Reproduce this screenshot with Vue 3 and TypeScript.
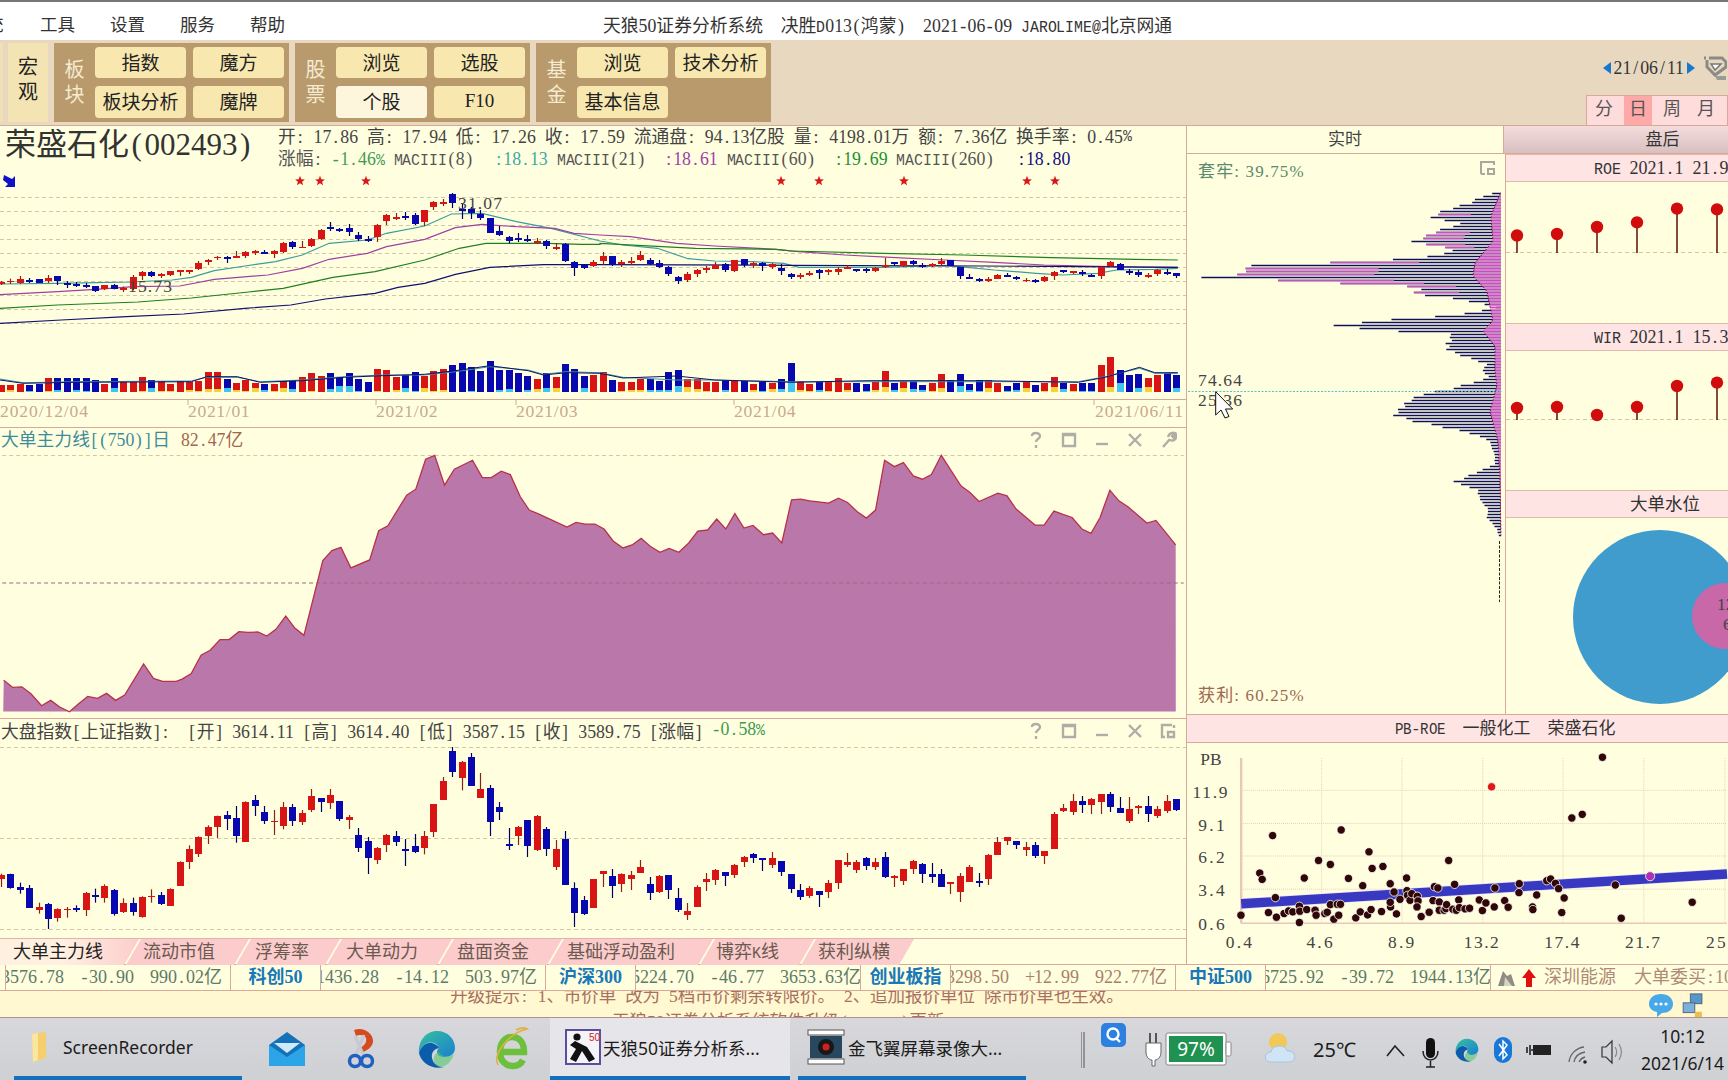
<template>
  <div class="app">
    <div class="titlebar">
      <div class="menu">
        <span class="menu-cut">统</span>
        <span v-for="m in menus" :key="m" class="menu-item">{{ m }}</span>
      </div>
      <div class="app-title"><T t="天狼50证券分析系统  决胜D013(鸿蒙)  2021-06-09 JAROLIME@北京网通" /></div>
    </div>

    <div class="toolbar">
      <div class="sliver"></div>
      <div class="macro">宏<br />观</div>
      <div v-for="g in groups" :key="g.name" class="group">
        <div class="group-name">{{ g.name[0] }}<br />{{ g.name[1] }}</div>
        <div class="group-btns">
          <div v-for="b in g.btns" :key="b" class="btn" :class="{ on: b === '个股' }">{{ b }}</div>
        </div>
      </div>
      <div class="tool-right">
        <div class="date-row">
          <svg width="10" height="14" viewBox="0 0 10 14"><path d="M9 1 L1 7 L9 13 Z" fill="#1878d0" /></svg>
          <span><T t="21/06/11" /></span>
          <svg width="10" height="14" viewBox="0 0 10 14"><path d="M1 1 L9 7 L1 13 Z" fill="#1878d0" /></svg>
          <svg class="date-ico" width="24" height="26" viewBox="0 0 24 26">
            <path d="M1 3 H3 M6 3 H19 L23 7 V12 L12 20 L4 12 V5" fill="none" stroke="#8a8a86" stroke-width="3" />
            <path d="M8 9 H18 L12 15 Z" fill="#fff" stroke="#777" stroke-width="1.5" />
            <path d="M12 21 H23 V25 H14 Z" fill="#9a9a96" />
          </svg>
        </div>
        <div class="periods">
          <span v-for="p in periods" :key="p" class="period" :class="{ on: p === '日' }">{{ p }}</span>
        </div>
      </div>
    </div>

    <div class="main">
      <div class="left">
        <section class="kline">
          <div class="kline-head">
            <div class="stock-name"><T t="荣盛石化(002493)" /></div>
            <div class="stock-info">
              <div class="info-row"><T t="开: 17.86 高: 17.94 低: 17.26 收: 17.59 流通盘: 94.13亿股 量: 4198.01万 额: 7.36亿 换手率: 0.45%" /></div>
              <div class="info-row">
                <span v-for="t in infoMa" :key="t.text" :style="{ color: t.c, marginLeft: t.ml + 'px' }"><T :t="t.text" /></span>
              </div>
            </div>
          </div>
          <svg class="chart kline-svg" viewBox="0 169 1186 258">
            <line v-for="y in klineGrid" :key="y" x1="0" x2="1186" :y1="y" :y2="y" class="dash" />
            <path d="M4 175 L12 179 L15 176 L15 187 L5 187 L8 184 L3 180 Z" fill="#1010c8" />
            <polygon v-for="s in stars" :key="s" :points="starPts(s, 181, 5.2)" fill="#d81818" />
            <polyline :points="maTeal" class="ma" stroke="#3c9c9c" />
            <polyline :points="maPurple" class="ma" stroke="#a040a0" />
            <polyline :points="maGreen" class="ma" stroke="#208020" />
            <polyline :points="maNavy" class="ma" stroke="#101070" />
            <g v-for="c in klineCandles" :key="c.x">
              <line :x1="c.x" :x2="c.x" :y1="c.high" :y2="c.low" :stroke="c.up ? '#8a2410' : '#00005c'" class="wick" />
              <rect :x="c.x - 3.5" :y="c.top" width="7" :height="c.h" :fill="c.up ? '#d81414' : '#0808b0'" class="crisp" />
            </g>
            <text x="458" y="209" class="val" :textLength="hw('31.07')">31.07</text>
            <text x="128" y="292" class="val" :textLength="hw('15.73')">15.73</text>
            <g v-for="b in volBars" :key="b.x">
              <rect :x="b.x - 3.5" :y="b.top" width="7" :height="392 - b.top" :fill="b.up ? '#d81414' : '#0808b0'" class="crisp" />
              <rect :x="b.x - 3.5" :y="392 - b.inner" width="7" :height="b.inner" :fill="b.up ? '#f8d23a' : '#40c4f0'" class="crisp" />
            </g>
            <polyline :points="volA" class="vol-ma" stroke="#3c9c9c" />
            <polyline :points="volB" class="vol-ma" stroke="#101070" />
            <line x1="0" x2="1186" y1="399.5" y2="399.5" stroke="#cfa898" />
            <line v-for="t in dateTicks" :key="t" :x1="t" :x2="t" y1="399" y2="405" stroke="#cfa898" />
            <text v-for="d in dates" :key="d.t" :x="d.x" y="417" class="date" :textLength="hw(d.t)">{{ d.t }}</text>
          </svg>
        </section>

        <section class="indicator">
          <div class="panel-head">
            <span class="ind-title"><T t="大单主力线[(750)]日" /></span>
            <span class="ind-val"><T t="82.47亿" /></span>
            <div class="panel-icons">
              <svg v-for="ic in indIcons" :key="ic" width="18" height="18" viewBox="0 0 18 18"><path :d="ic" /></svg>
            </div>
          </div>
          <svg class="chart ind-svg" viewBox="0 453 1186 265">
            <line x1="0" x2="1186" y1="454.5" y2="454.5" class="dash" />
            <polygon :points="areaPts + ' 1178,711.5 1,711.5'" fill="#ba78aa" />
            <polyline :points="areaPts" fill="none" stroke="#b8304a" stroke-width="1.3" />
            <line x1="0" x2="1186" y1="582.5" y2="582.5" class="dash dark" />
          </svg>
        </section>

        <section class="index">
          <div class="panel-head">
            <span class="idx-title"><T t="大盘指数[上证指数]:  [开] 3614.11 [高] 3614.40 [低] 3587.15 [收] 3589.75 [涨幅] " /></span>
            <span class="idx-pct"><T t="-0.58%" /></span>
            <div class="panel-icons">
              <svg v-for="ic in idxIcons" :key="ic" width="18" height="18" viewBox="0 0 18 18"><path :d="ic" /></svg>
            </div>
          </div>
          <svg class="chart idx-svg" viewBox="0 745 1186 192">
            <line v-for="y in [746.5, 837.5, 928.5]" :key="y" x1="0" x2="1186" :y1="y" :y2="y" class="dash" />
            <g v-for="c in indexCandles" :key="c.x">
              <line :x1="c.x" :x2="c.x" :y1="c.high" :y2="c.low" :stroke="c.up ? '#8a2410' : '#00005c'" class="wick" />
              <rect :x="c.x - 3.5" :y="c.top" width="7" :height="c.h" :fill="c.up ? '#d81414' : '#0808b0'" class="crisp" />
            </g>
          </svg>
        </section>

        <div class="tabs">
          <div
            v-for="(t, i) in tabs"
            :key="t.name"
            class="tab"
            :class="{ first: i === 0 }"
            :style="{ width: t.w + 'px', paddingLeft: t.pad + 'px' }"
          ><T :t="t.name" /></div>
        </div>
      </div>

      <div class="right">
        <div class="right-heads">
          <div class="rt-head">实时</div>
          <div class="after-head">盘后</div>
        </div>
        <div class="right-body">
          <svg class="chart rt-svg" viewBox="1187 153 318 560">
            <text x="1198" y="176" class="rt-lbl" :textLength="hw('套牢: 39.75%')">套牢: 39.75%</text>
            <path d="M1481 173 V161 H1494 V164 M1481 173 H1485 M1488 168 H1494 V173 H1488 Z" fill="none" stroke="#a8a8a0" stroke-width="2" />
            <g v-for="r in profile" :key="r.y">
              <line :x1="r.x" x2="1501" :y1="r.y" :y2="r.y" stroke="#10105c" stroke-width="1.5" />
              <line v-if="r.pink > r.x" :x1="r.x" :x2="r.pink" :y1="r.y" :y2="r.y" stroke="#c850c0" stroke-width="1.5" />
              <line :x1="1501 - r.m" x2="1501" :y1="r.y" :y2="r.y" stroke="#d048c8" stroke-width="1.9" />
            </g>
            <polyline :points="profileEdge" fill="none" stroke="#8a1a5a" stroke-width="1" stroke-dasharray="2 1.5" />
            <line x1="1499.5" x2="1499.5" y1="540" y2="601" stroke="#222" stroke-dasharray="3 1.5" />
            <line x1="1188" x2="1503" y1="390.5" y2="390.5" stroke="#58c0d0" stroke-dasharray="2 1.5" />
            <text x="1198" y="385" class="val" :textLength="hw('74.64')">74.64</text>
            <text x="1198" y="405" class="val" :textLength="hw('25.36')">25.36</text>
            <path d="M1215.7 390.7 V414 L1221 409 L1225 417 L1229 415.5 L1225.5 408 H1232.7 Z" fill="#fff" stroke="#111" stroke-width="1" />
            <text x="1198" y="700" class="rt-lbl gain" :textLength="hw('获利: 60.25%')">获利: 60.25%</text>
          </svg>
          <div class="stack">
            <div class="stack-head fin"><T t="ROE 2021.1 21.9" /></div>
            <svg class="chart" width="318" height="141" viewBox="1505 181 318 141">
              <line x1="1505" x2="1823" y1="251.5" y2="251.5" class="dash" />
              <g v-for="p in roe" :key="p.x">
                <line :x1="p.x" :x2="p.x" :y1="p.y" y2="252" stroke="#6a1c10" stroke-width="1.6" />
                <circle :cx="p.x" :cy="p.y" r="6.2" fill="#d00c0c" />
              </g>
            </svg>
            <div class="stack-head fin"><T t="WIR 2021.1 15.3" /></div>
            <svg class="chart" width="318" height="139" viewBox="1505 351 318 139">
              <line x1="1505" x2="1823" y1="419.5" y2="419.5" class="dash" />
              <g v-for="p in wir" :key="p.x">
                <line :x1="p.x" :x2="p.x" :y1="p.y" y2="420" stroke="#6a1c10" stroke-width="1.6" />
                <circle :cx="p.x" :cy="p.y" r="6.2" fill="#d00c0c" />
              </g>
            </svg>
            <div class="stack-head">大单水位</div>
            <svg class="chart" width="318" height="195" viewBox="1505 518 318 195">
              <circle cx="1659" cy="617" r="87" fill="#409ccc" />
              <circle cx="1724" cy="616" r="33" fill="#c868a8" />
              <text x="1716" y="610" class="val">12</text>
              <text x="1722" y="630" class="val">6</text>
            </svg>
          </div>
        </div>
        <div class="pb-head"><T t="PB-ROE  一般化工  荣盛石化" /></div>
        <svg class="chart pb-svg" viewBox="1187 742 634 222">
          <line v-for="x in pbGridX" :key="x" :x1="x" :x2="x" y1="757" y2="922" stroke="#e0d0b8" stroke-dasharray="1 1" />
          <line v-for="y in pbGridY" :key="y" x1="1240" x2="1728" :y1="y" :y2="y" stroke="#e0d0b8" stroke-dasharray="1 1" />
          <line x1="1240" x2="1240" y1="757" y2="923" stroke="#e8c8b8" stroke-width="2.4" />
          <line x1="1240" x2="1728" y1="923" y2="923" stroke="#e8c8b8" stroke-width="1.6" />
          <line x1="1240" y1="903.5" x2="1728" y2="873.5" stroke="#e8e0f8" stroke-width="11" />
          <line x1="1240" y1="903.5" x2="1728" y2="873.5" stroke="#3838c0" stroke-width="9.5" />
          <text x="1199" y="764" class="val">PB</text>
          <text v-for="l in pbYLabels" :key="l.t" :x="l.x" :y="l.y" class="val" :textLength="hw(l.t)">{{ l.t }}</text>
          <text v-for="l in pbXLabels" :key="l.t" :x="l.x" y="948" class="val" :textLength="hw(l.t)">{{ l.t }}</text>
          <circle v-for="(d, i) in pbDots" :key="i" :cx="d.x" :cy="d.y" r="4.2" fill="#300606" stroke="#fff" stroke-width="0.8" />
          <circle cx="1491.5" cy="786" r="4.2" fill="#e01818" stroke="#fff" stroke-width="0.8" />
          <circle cx="1650.8" cy="875.8" r="4.6" fill="#b030b0" stroke="#fff" stroke-width="0.8" />
        </svg>
      </div>
    </div>

    <div class="ticker">
      <template v-for="q in quotes" :key="q.label">
        <div class="quote" :class="q.up ? 'up' : 'down'">
          <span><T :t="q.a" /></span><span><T :t="q.b" /></span><span><T :t="q.c" /></span>
        </div>
        <div class="quote-label">{{ q.label }}</div>
      </template>
      <div class="quote down">
        <span><T t="6725.92" /></span><span><T t="-39.72" /></span><span><T t="1944.13亿" /></span>
      </div>
      <div class="news">
        <svg width="20" height="20" viewBox="0 0 20 20">
          <path d="M1 18 L6 3 L10 8 L14 6 L18 18 Z" fill="#908c84" />
          <path d="M7 18 L8 9 L15 18 Z" fill="#d8d4c4" />
        </svg>
        <svg width="14" height="20" viewBox="0 0 14 20"><path d="M7 1 L14 10 H10 V19 H4 V10 H0 Z" fill="#e01010" /></svg>
        <span class="news-text"><T t="深圳能源  大单委买:10896" /></span>
      </div>
    </div>

    <div class="notice">
      <div class="notice-lines">
        <div><T t="升级提示: 1、市价单 改为 5档市价剩余转限价。 2、追加报价单位 除市价单也生效。" /></div>
        <div><T t="天狼50证券分析系统软件升级(      )更新。" /></div>
      </div>
      <div class="notice-icons">
        <svg width="26" height="24" viewBox="0 0 26 24">
          <path d="M13 1 C20 1 25 5 25 11 C25 17 20 20 14 20 L9 24 L9 19 C4 18 1 15 1 11 C1 5 6 1 13 1 Z" fill="#48a8e8" />
          <circle cx="8" cy="11" r="1.6" fill="#fff" /><circle cx="13" cy="11" r="1.6" fill="#fff" /><circle cx="18" cy="11" r="1.6" fill="#fff" />
        </svg>
        <svg width="24" height="25" viewBox="0 0 24 28">
          <rect x="9" y="1" width="13" height="11" fill="#5898c8" stroke="#48607c" />
          <rect x="1" y="11" width="13" height="11" fill="#7cb0d8" stroke="#48607c" />
          <rect x="14" y="21" width="8" height="6" fill="#e8c050" />
        </svg>
      </div>
    </div>

    <div class="taskbar">
      <div class="task-item folder-item">
        <svg width="18" height="32" viewBox="0 0 18 32">
          <path d="M2 3 L16 1 V27 L3 31 Z" fill="#f4cf6c" />
          <path d="M2 3 L8 2 V29 L3 31 Z" fill="#fbe6a0" />
        </svg>
        <span>ScreenRecorder</span>
      </div>
      <div class="pin">
        <svg width="36" height="34" viewBox="0 0 36 34">
          <path d="M18 0 L36 13 V34 H0 V13 Z" fill="#1672b8" />
          <path d="M0 13 L18 25 L36 13 V34 H0 Z" fill="#2ca4e8" />
          <path d="M5 11 H31 L18 21 Z" fill="#cfeaf8" />
        </svg>
      </div>
      <div class="pin">
        <svg width="30" height="42" viewBox="0 0 30 42">
          <path d="M7 2 C17 -2 27 6 26 14 C25 19 21 22 16 24 L13 20 C18 17 20 14 19 10 C18 7 12 6 9 8 Z" fill="#d64a20" />
          <path d="M8 8 L17 28 M17 7 L9 27" stroke="#c8c8d0" stroke-width="3" />
          <circle cx="8" cy="33" r="5.5" fill="none" stroke="#2060c0" stroke-width="3.5" />
          <circle cx="20" cy="33" r="5.5" fill="none" stroke="#2060c0" stroke-width="3.5" />
        </svg>
      </div>
      <div class="pin">
        <svg width="38" height="38" viewBox="0 0 38 38"><use href="#edge-logo" /></svg>
      </div>
      <div class="pin">
        <svg width="34" height="44" viewBox="0 0 34 44">
          <path d="M7 25 H29 C29 15 24 10 17 10 C10 10 5 16 5 25 C5 34 11 39 18 39 C23 39 26 37 28 33" fill="none" stroke="#6cc03c" stroke-width="6.5" />
          <path d="M3 38 C-3 26 16 5 32 2 C29 0 25 1 21 3" fill="none" stroke="#e0b040" stroke-width="1.6" />
        </svg>
      </div>
      <div class="task-item active-item">
        <svg width="36" height="36" viewBox="0 0 36 36">
          <rect x="1" y="1" width="34" height="34" fill="#f4f4f8" stroke="#58509c" stroke-width="2" />
          <circle cx="12" cy="8" r="3.6" fill="#111" />
          <path d="M10 12 L22 18 L30 30 L24 33 L17 22 L11 33 L5 30 L11 20 L5 16 Z" fill="#111" />
          <text x="24" y="12" class="tiny">50</text>
        </svg>
        <span>天狼50证券分析系...</span>
      </div>
      <div class="task-item film-item">
        <svg width="38" height="36" viewBox="0 0 38 36">
          <rect x="1" y="1" width="36" height="5" fill="#fff" stroke="#555" />
          <rect x="1" y="30" width="36" height="5" fill="#fff" stroke="#555" />
          <rect x="3" y="7" width="32" height="22" fill="#284860" />
          <circle cx="19" cy="18" r="8" fill="#181818" />
          <circle cx="19" cy="18" r="3.5" fill="#d02020" />
        </svg>
        <span>金飞翼屏幕录像大...</span>
      </div>
      <svg class="tray" width="550" height="62" viewBox="1081 1018 550 62">
        <path d="M1081 1032 V1068 M1084 1032 V1068" stroke="#555" stroke-width="1" />
        <rect x="1101" y="1023" width="25" height="24" rx="5" fill="#2c80e0" />
        <circle cx="1113" cy="1034" r="5.5" fill="none" stroke="#fff" stroke-width="2.4" />
        <path d="M1116 1038 L1120 1042" stroke="#fff" stroke-width="2.4" />
        <path d="M1150 1033 V1043 M1156 1033 V1043" stroke="#555" stroke-width="2" fill="none" />
        <path d="M1146 1043 H1161 V1052 C1161 1058 1157 1060 1155 1060 V1066 H1152 V1060 C1150 1060 1146 1058 1146 1052 Z" fill="#fff" stroke="#666" />
        <rect x="1166" y="1033" width="60" height="32" rx="2" fill="#fff" stroke="#888" />
        <rect x="1169" y="1036" width="54" height="26" fill="#1f9150" />
        <rect x="1226" y="1042" width="5" height="14" rx="1.5" fill="#fff" stroke="#888" />
        <text x="1196" y="1056" class="bat-text">97%</text>
        <circle cx="1278" cy="1042" r="9" fill="#f2c858" />
        <path d="M1271 1062 C1263 1062 1264 1052 1271 1052 C1272 1044 1286 1044 1287 1051 C1297 1050 1297 1062 1289 1062 Z" fill="#cfe4f4" stroke="#a8c4dc" />
        <text x="1313" y="1057" class="temp">25℃</text>
        <path d="M1387 1056 L1395 1046 L1404 1056" fill="none" stroke="#222" stroke-width="1.6" />
        <rect x="1426" y="1038" width="9" height="20" rx="4.5" fill="#111" />
        <path d="M1423 1051 C1423 1063 1438 1063 1438 1051 M1430.5 1061 V1067 M1426 1067 H1435" fill="none" stroke="#222" stroke-width="1.5" />
        <svg x="1455" y="1038" width="24" height="24" viewBox="0 0 38 38"><use href="#edge-logo" /></svg>
        <rect x="1494" y="1037" width="18" height="26" rx="9" fill="#1878d8" />
        <path d="M1499 1044 L1507 1055 L1503 1059 V1041 L1507 1045 L1499 1056" fill="none" stroke="#fff" stroke-width="1.5" />
        <rect x="1533" y="1045" width="18" height="10" fill="#222" />
        <path d="M1527 1047 V1053 M1530 1045 V1055 M1531 1050 H1533" stroke="#222" stroke-width="1.6" />
        <path d="M1569 1062 C1570 1054 1576 1048 1584 1047 M1574 1062 C1575 1057 1579 1053 1585 1052 M1579 1062 C1580 1060 1581 1058 1585 1057" fill="none" stroke="#666" stroke-width="1.3" />
        <circle cx="1585" cy="1062" r="1.8" fill="#222" />
        <path d="M1602 1047 H1606 L1612 1041 V1063 L1606 1057 H1602 Z" fill="none" stroke="#333" stroke-width="1.2" />
        <path d="M1615 1047 C1617 1050 1617 1054 1615 1057 M1619 1044 C1622 1049 1622 1055 1619 1060" fill="none" stroke="#888" stroke-width="1.2" />
      </svg>
      <div class="clock">
        <div class="clock-time">10:12</div>
        <div class="clock-date">2021/6/14</div>
      </div>
    </div>

    <svg class="defs" width="0" height="0">
      <defs>
        <linearGradient id="edge-a" x1="0" y1="0" x2="1" y2="1">
          <stop offset="0" stop-color="#35c1a0" />
          <stop offset="1" stop-color="#1a7fd0" />
        </linearGradient>
        <symbol id="edge-logo" viewBox="0 0 38 38">
          <path d="M19 1 C30 1 37 9 37 18 C37 24 32 27 27 27 C22 27 19 25 19 22 C19 20 20 19 21 18 C19 13 14 11 9 13 C5 15 2 19 1 23 C0 11 8 1 19 1 Z" fill="url(#edge-a)" />
          <path d="M1 23 C3 16 9 12 14 13 C18 14 20 16 21 18 C15 19 12 25 15 31 C17 35 22 37 26 37 C14 40 3 33 1 23 Z" fill="#0c5cac" />
          <path d="M21 22 C23 27 31 28 36 24 C33 33 27 37 22 37 C17 36 15 31 16 27 C17 24 19 23 21 22 Z" fill="#52c870" opacity="0.6" />
        </symbol>
      </defs>
    </svg>
  </div>
</template>

<script setup lang="ts">
import { h, type FunctionalComponent, type VNodeChild } from 'vue'

interface Candle {
  x: number
  up: boolean
  top: number
  h: number
  high: number
  low: number
}

// 宋体的半角格：数字本身就是半角，其余 ASCII 字符放进半角宽的格子里
const T: FunctionalComponent<{ t: string }> = props => {
  const out: VNodeChild[] = []
  let run = ''
  const flush = () => {
    if (run) out.push(run)
    run = ''
  }
  for (const ch of props.t) {
    if (/[0-9]/.test(ch) || ch.charCodeAt(0) > 127) {
      run += ch
    } else {
      flush()
      const wide = /[A-Za-z%@]/.test(ch)
      out.push(h('span', { class: wide ? 'hw ltr' : 'hw' }, ch === ' ' ? '\u00a0' : ch))
    }
  }
  flush()
  return out
}
T.props = ['t']

function hw(t: string, fs = 17.6): number {
  let units = 0
  for (const ch of t) units += ch.charCodeAt(0) > 127 ? 2 : 1
  return (units * fs) / 2
}

const menus = ['工具', '设置', '服务', '帮助']
const periods = ['分', '日', '周', '月']

const groups = [
  { name: '板块', btns: ['指数', '魔方', '板块分析', '魔牌'] },
  { name: '股票', btns: ['浏览', '选股', '个股', 'F10'] },
  { name: '基金', btns: ['浏览', '技术分析', '基本信息'] }
]

const infoMa = [
  { text: '涨幅: ', c: '#555', ml: 0 },
  { text: '-1.46% ', c: '#3f9a50', ml: 0 },
  { text: 'MACIII(8)  ', c: '#555', ml: 0 },
  { text: ':18.13 ', c: '#3ea8a8', ml: 3 },
  { text: 'MACIII(21)  ', c: '#555', ml: 0 },
  { text: ':18.61 ', c: '#a040a8', ml: 1 },
  { text: 'MACIII(60)  ', c: '#555', ml: 0 },
  { text: ':19.69 ', c: '#209030', ml: 1 },
  { text: 'MACIII(260)  ', c: '#555', ml: 0 },
  { text: ':18.80', c: '#101080', ml: 5 }
]

const stars = [300, 320, 366, 781, 819, 904, 1027, 1055]
const klineGrid = [197.5, 211.5, 225.5, 239.5, 253.5, 267.5, 281.5, 295.5, 309.5, 323.5]
const dateTicks = [188, 376, 516, 734, 1094]
const dates = [
  { t: '2020/12/04', x: 0 },
  { t: '2021/01', x: 188 },
  { t: '2021/02', x: 376 },
  { t: '2021/03', x: 516 },
  { t: '2021/04', x: 734 },
  { t: '2021/06/11', x: 1095 }
]

function starPts(cx: number, cy: number, r: number): string {
  const out: string[] = []
  for (let i = 0; i < 10; i++) {
    const a = -Math.PI / 2 + (i * Math.PI) / 5
    const rr = i % 2 ? r * 0.42 : r
    out.push(`${(cx + rr * Math.cos(a)).toFixed(1)},${(cy + rr * Math.sin(a)).toFixed(1)}`)
  }
  return out.join(' ')
}

// 行情: 颜色 实体上 实体下 上影 下影，数值是放大 3 倍后的读数
function parseCandles(src: string, y0: number): Candle[] {
  return src
    .trim()
    .split(/\s*,\s*/)
    .map((row, i) => {
      const [c, a, b, t, l] = row.split(' ')
      const top = y0 + Number(a) / 3
      return {
        x: Math.round(1 + 9.4 * i) + 0.5,
        up: c === 'r',
        top,
        h: Math.max(1.5, (Number(b) - Number(a)) / 3),
        high: y0 + Number(t) / 3,
        low: y0 + Number(l) / 3
      }
    })
}

const klineCandles = parseCandles(
  `r 306 312 303 315,r 302 305 296 312,r 297 309 288 312,b 300 303 294 309,b 297 309 297 309,
  r 294 303 285 309,b 288 303 288 315,b 309 312 303 324,b 312 319 306 321,b 315 318 309 324,
  b 318 333 318 336,r 315 327 315 330,b 315 327 312 328,r 325 328 320 336,r 291 327 285 330,
  r 276 288 273 300,b 276 287 273 291,r 283 286 279 294,r 273 285 273 288,r 270 273 270 288,
  r 270 273 270 282,r 249 267 243 270,r 240 246 237 255,r 230 233 228 240,b 231 234 228 249,
  r 228 231 213 234,r 216 228 213 234,r 213 216 210 225,b 216 219 210 222,r 213 222 210 234,
  r 189 216 186 219,b 186 201 183 207,r 200 202 183 204,r 177 198 174 201,r 150 177 147 180,
  b 141 144 126 153,b 147 150 144 156,b 144 156 132 168,b 165 177 156 183,b 177 180 168 186,
  r 135 171 132 186,r 105 123 102 135,r 111 114 99 120,b 108 111 96 120,b 105 132 99 135,
  r 90 126 90 138,r 66 81 63 90,r 66 69 57 78,b 42 69 39 84,b 87 90 72 117,b 87 99 81 117,
  b 102 114 90 120,b 114 159 114 159,b 153 165 138 168,b 171 183 168 190,b 174 177 159 186,
  b 177 180 165 186,r 183 186 174 192,b 183 198 180 207,r 201 204 189 210,b 192 243 189 246,
  b 246 264 243 288,b 255 264 252 267,r 246 258 240 261,r 228 243 216 255,b 228 255 228 258,
  r 246 252 240 261,r 243 246 231 255,r 225 240 213 243,b 240 252 234 255,b 249 261 240 264,
  b 261 282 258 288,b 291 303 288 312,r 282 300 276 306,r 270 282 267 291,r 264 267 258 279,
  r 255 267 246 267,b 252 270 249 276,r 240 273 240 276,b 237 255 237 261,r 249 252 246 264,
  b 249 258 246 273,r 252 261 249 267,b 264 273 252 285,b 282 291 279 297,r 285 291 279 297,
  r 279 285 273 288,b 270 279 267 297,r 270 273 267 285,r 267 276 261 285,r 261 264 255 267,
  b 267 270 267 276,b 267 273 264 279,r 264 273 261 276,r 255 261 234 264,b 246 249 246 258,
  r 243 258 243 261,b 243 252 240 255,b 255 258 249 264,r 253 258 249 261,r 243 252 234 258,
  b 240 258 240 258,b 261 288 261 297,b 291 292 282 294,b 297 303 294 306,r 297 301 291 306,
  r 285 297 282 297,b 285 287 279 291,b 291 294 288 300,r 299 301 294 306,b 300 303 297 309,
  r 291 303 288 306,r 276 288 273 300,b 270 277 270 279,r 274 280 273 282,b 276 279 270 288,
  b 285 288 282 291,r 261 288 258 297,r 246 258 243 261,b 252 270 249 270,b 273 279 267 285,
  b 276 285 270 291,r 285 288 279 294,r 270 282 267 288,b 276 279 267 285,b 279 288 279 294`,
  180
)

const indexCandles = parseCandles(
  `r 491 503 488 528,b 488 531 488 533,b 528 537 515 548,b 531 590 522 590,r 587 597 575 608,
  b 578 624 576 654,r 594 621 592 632,r 593 596 588 620,b 591 597 583 603,r 546 597 543 615,
  b 552 558 533 575,r 524 561 520 575,b 537 609 534 614,r 576 603 562 606,b 576 603 560 614,
  r 558 618 556 620,r 554 558 535 575,b 552 579 543 582,r 534 585 532 585,r 453 525 451 525,
  r 415 453 403 474,r 378 429 376 438,r 348 375 343 399,r 316 348 314 381,b 312 323 300 357,
  b 321 375 285 395,r 273 393 271 393,b 267 285 252 315,b 303 330 285 339,r 329 332 297 372,
  r 288 345 273 355,b 288 330 279 345,r 306 333 297 342,r 255 297 234 303,b 261 273 261 303,
  r 252 276 234 294,b 270 324 270 330,r 318 327 312 354,b 372 411 351 423,b 390 441 378 489,
  r 411 447 408 459,r 372 402 369 423,b 375 393 360 405,b 414 416 384 465,b 405 423 369 426,
  r 375 411 360 430,r 279 363 279 378,r 210 267 198 267,b 120 183 108 198,r 153 201 150 238,
  b 138 225 126 225,r 234 261 186 261,b 231 333 222 375,b 288 303 273 327,b 399 404 351 417,
  r 348 375 345 402,b 327 405 327 438,r 315 417 312 420,b 354 414 348 435,r 414 468 387 477,
  b 384 522 360 522,b 531 606 514 648,b 567 609 555 612,r 504 591 504 591,r 480 490 480 528,
  b 495 525 474 561,r 489 519 487 543,r 492 504 480 537,r 468 486 447 486,b 519 546 498 567,
  r 495 543 492 546,b 492 537 492 564,b 561 597 531 603,r 600 612 576 627,r 528 588 523 588,
  r 504 513 486 540,r 477 507 474 522,b 483 495 483 525,r 462 492 459 501,r 438 453 435 468,
  b 429 441 426 456,b 441 444 441 480,r 441 462 423 471,b 450 483 450 495,b 489 534 489 546,
  b 537 558 519 567,r 531 555 525 561,b 540 552 540 588,r 516 543 507 561,r 447 516 447 534,
  r 453 462 426 468,r 453 477 447 486,b 441 465 438 477,r 453 468 441 477,b 438 498 423 501,
  r 495 497 492 528,r 474 510 474 522,r 450 474 447 489,b 459 489 456 516,b 489 498 456 516,
  b 489 528 474 528,r 513 516 513 549,r 495 543 486 573,r 468 513 462 513,b 511 513 486 528,
  r 432 504 429 522,r 393 432 378 432,r 378 390 378 402,b 390 402 390 414,r 408 416 393 435,
  b 402 435 393 441,r 420 435 420 459,r 309 414 303 414,r 291 300 279 303,r 270 303 249 312,
  b 270 282 255 306,r 264 282 261 309,r 249 273 249 309,b 249 288 243 303,b 291 306 258 306,
  r 294 330 258 336,r 285 288 282 309,b 285 309 255 333,r 294 315 285 321,r 270 300 252 306,
  b 264 297 264 300`,
  710
)

const volTops = [
  615, 615, 612, 615, 612, 595, 595, 595, 595, 595, 600, 612, 595, 606, 606, 591, 600, 603, 612, 603,
  606, 604, 576, 576, 597, 609, 600, 609, 612, 612, 603, 600, 591, 579, 588, 579, 591, 579, 597, 606,
  567, 570, 591, 585, 576, 588, 573, 567, 555, 549, 561, 573, 544, 570, 570, 579, 588, 598, 579, 590,
  552, 567, 588, 585, 575, 600, 606, 606, 598, 597, 603, 576, 570, 597, 597, 606, 606, 600, 604, 604,
  612, 606, 610, 597, 549, 603, 612, 606, 603, 594, 609, 609, 612, 606, 573, 609, 603, 603, 615, 609,
  582, 600, 582, 612, 600, 600, 609, 618, 609, 603, 615, 609, 591, 609, 612, 609, 609, 555, 531, 570,
  585, 582, 594, 585, 579, 585
]

const volBars = volTops.map((v, i) => {
  const top = 180 + v / 3
  const noise = Math.abs(Math.sin(i * 12.9898) * 43758.5453) % 1
  return {
    x: Math.round(1 + 9.4 * i) + 0.5,
    up: (klineCandles[i] ?? { up: false }).up,
    top,
    inner: Math.round((392 - top) * 0.4 * noise * noise)
  }
})

function toPts(src: number[], x0: number, y0: number, sx: number): string {
  const out: string[] = []
  for (let i = 0; i < src.length; i += 2) {
    out.push(`${(x0 + src[i] / sx).toFixed(1)},${(y0 + src[i + 1] / 3).toFixed(1)}`)
  }
  return out.join(' ')
}

const kx = 1568 / 600
const maLine = (a: number[], b: number[]) => toPts(a, 0, 180, kx) + ' ' + toPts(b, 600, 180, kx)

const maTeal = maLine(
  [0, 312, 150, 310, 250, 308, 340, 306, 450, 300, 500, 292, 560, 272, 640, 258, 720, 245, 790, 225, 860, 190, 960, 180, 1010, 160, 1110, 138, 1180, 102, 1260, 100, 1350, 125, 1440, 145, 1568, 183],
  [0, 183, 60, 195, 150, 205, 230, 236, 300, 243, 400, 245, 480, 250, 520, 262, 650, 262, 740, 262, 900, 256, 960, 262, 1030, 270, 1140, 280, 1210, 285, 1300, 280, 1350, 270, 1450, 268, 1510, 265]
)
const maPurple = maLine(
  [0, 344, 150, 335, 250, 328, 350, 320, 470, 318, 560, 298, 700, 285, 790, 265, 860, 238, 960, 220, 1010, 200, 1110, 178, 1190, 143, 1260, 133, 1350, 140, 1450, 145, 1500, 160, 1568, 165],
  [0, 165, 80, 170, 200, 190, 300, 198, 460, 208, 520, 215, 640, 225, 760, 232, 900, 240, 1030, 247, 1160, 255, 1270, 258, 1400, 261, 1510, 262]
)
const maGreen = maLine(
  [0, 385, 150, 375, 360, 366, 500, 354, 650, 336, 740, 325, 870, 292, 980, 275, 1110, 240, 1200, 205, 1270, 190, 1430, 190, 1520, 193, 1568, 193],
  [0, 190, 250, 205, 460, 208, 500, 213, 740, 220, 950, 225, 1180, 233, 1400, 238, 1510, 240]
)
const maNavy = maLine(
  [0, 430, 160, 420, 330, 410, 480, 402, 640, 385, 760, 375, 850, 357, 980, 340, 1040, 322, 1110, 310, 1190, 283, 1280, 262, 1420, 254, 1568, 254],
  [0, 254, 500, 256, 1000, 258, 1510, 262]
)
const volA = maLine(
  [0, 597, 60, 608, 200, 605, 500, 603, 540, 592, 620, 592, 680, 605, 790, 600, 900, 590, 1000, 585, 1110, 585, 1190, 575, 1280, 560, 1380, 570, 1420, 583, 1480, 575, 1568, 578],
  [0, 578, 60, 592, 200, 600, 300, 600, 500, 605, 700, 605, 1000, 605, 1250, 605, 1320, 590, 1410, 565, 1450, 580, 1510, 580]
)
const volB = maLine(
  [0, 600, 60, 610, 200, 607, 500, 605, 540, 590, 620, 590, 680, 607, 790, 602, 900, 592, 1000, 587, 1110, 583, 1190, 572, 1280, 557, 1380, 572, 1420, 585, 1480, 578, 1568, 580],
  [0, 580, 60, 594, 200, 588, 300, 600, 500, 607, 700, 602, 1000, 602, 1250, 607, 1320, 592, 1410, 562, 1450, 578, 1510, 578]
)

const areaPts = toPts(
  [2, 765, 14, 787, 26, 785, 38, 806, 52, 842, 64, 826, 76, 846, 89, 860, 101, 836, 113, 814, 126, 820, 138, 805, 150, 826, 162, 810, 187, 716, 200, 760, 212, 769, 230, 769, 238, 762, 250, 745, 263, 690, 275, 675, 288, 643, 300, 643, 313, 619, 325, 621, 338, 620, 350, 632, 362, 612, 375, 572, 387, 608, 399, 630, 424, 405, 436, 375, 448, 365, 461, 427, 486, 403, 498, 315, 510, 300, 535, 208, 547, 190, 560, 100, 572, 88, 585, 178, 598, 130, 622, 103, 635, 155, 647, 155, 660, 136, 672, 146, 685, 212, 697, 253, 710, 265, 747, 304, 759, 290, 771, 295, 784, 295, 796, 310, 808, 346, 821, 367, 833, 358, 845, 338, 857, 362, 870, 380, 882, 368, 895, 380, 908, 352, 920, 316, 933, 313, 945, 280, 957, 310, 969, 263, 981, 307, 993, 299, 1007, 327, 1019, 322, 1031, 352, 1044, 222, 1056, 220, 1068, 225, 1093, 232, 1106, 217, 1118, 230, 1131, 258, 1143, 277, 1155, 253, 1167, 103, 1180, 122, 1192, 110, 1205, 150, 1217, 160, 1229, 146, 1242, 88, 1268, 180, 1280, 200, 1292, 227, 1317, 202, 1329, 210, 1341, 250, 1366, 298, 1378, 298, 1391, 256, 1403, 266, 1415, 275, 1428, 310, 1440, 323, 1452, 275, 1465, 193, 1477, 225, 1489, 243, 1514, 292, 1526, 284, 1552, 358],
  0,
  425,
  1568 / 1190
)

const iconHelp = 'M5 5 C5 1 13 1 13 5 C13 8 9 8 9 11 M9 14 V17'
const iconBox = 'M3 3 H15 V15 H3 Z M3 4 H15'
const iconMin = 'M3 13 H15'
const iconClose = 'M3 3 L15 15 M15 3 L3 15'
const iconWrench = 'M4 16 L11 8 M9 6 C10 2 14 1 16 2 L13 5 L15 7 L17 4 C18 7 15 11 11 9'
const iconRestore = 'M13 3 H3 V15 H6 M9 10 H15 V15 H9 Z M15 3 V6'
const indIcons = [iconHelp, iconBox, iconMin, iconClose, iconWrench]
const idxIcons = [iconHelp, iconBox, iconMin, iconClose, iconRestore]

const tabs = [
  { name: '大单主力线', w: 156, pad: 28 },
  { name: '流动市值', w: 125, pad: 17 },
  { name: '浮筹率', w: 106, pad: 19 },
  { name: '大单动力', w: 127, pad: 19 },
  { name: '盘面资金', w: 125, pad: 18 },
  { name: '基础浮动盈利', w: 166, pad: 18 },
  { name: '博弈K线', w: 116, pad: 16 },
  { name: '获利纵横', w: 115, pad: 17 }
]

// 筹码分布的左边界，读数是放大 3 倍后的坐标
const profileKeys: [number, number][] = [
  [38, 935], [52, 890], [65, 870], [80, 815], [95, 770], [115, 745], [125, 850], [140, 795], [155, 755],
  [170, 725], [185, 685], [200, 800], [215, 810], [228, 720], [240, 590], [250, 255], [256, 185], [270, 185],
  [276, 240], [288, 27], [296, 225], [305, 430], [313, 595], [320, 745], [337, 680], [350, 790], [365, 890],
  [380, 950], [400, 840], [415, 640], [432, 450], [445, 545], [460, 800], [470, 810], [490, 795], [510, 800],
  [530, 860], [550, 920], [570, 905], [590, 930], [610, 855], [625, 800], [640, 720], [660, 680], [680, 660],
  [702, 635], [720, 690], [740, 790], [760, 880], [780, 930], [800, 935], [820, 945], [850, 945], [875, 885],
  [890, 850], [905, 812], [925, 890], [945, 895], [965, 905], [985, 925], [1010, 920], [1030, 940], [1050, 955],
  [1070, 957]
]
const magentaKeys: [number, number][] = [
  [193, 1], [215, 10], [240, 8], [262, 26], [275, 28], [290, 14], [320, 8], [330, 18], [345, 6], [370, 6],
  [385, 4], [410, 11], [440, 3], [480, 1], [537, 0]
]

function lerp(keys: [number, number][], v: number): number {
  for (let i = 1; i < keys.length; i++) {
    if (v <= keys[i][0]) {
      const [a, b] = keys[i - 1]
      const [c, d] = keys[i]
      return b + ((d - b) * (v - a)) / (c - a)
    }
  }
  return keys[keys.length - 1][1]
}

const profile = Array.from({ length: 115 }, (_, i) => {
  const y = 192.5 + i * 3
  const raw = lerp(profileKeys, (y - 180) * 3)
  const x = 1180 + raw / 3 + (i % 2 ? 4 : 0) * Math.min(1, (1490 - 1180 - raw / 3) / 40)
  const inPink = (y > 212 && y < 218) || (y > 231 && y < 247) || (y > 260 && y < 292)
  const pink = inPink && i % 4 !== 0 ? x + (1501 - x) * 0.52 : 0
  return { y, x: Math.min(x, 1500), pink, m: lerp(magentaKeys, y) }
})
const profileEdge = profile.map(r => `${(1501 - r.m).toFixed(1)},${r.y}`).join(' ')

const lolliX = [1516, 1556, 1596, 1636, 1676, 1716]
const roe = [234.5, 233, 226, 221.4, 207.6, 208.4].map((y, i) => ({ x: lolliX[i], y }))
const wir = [408, 407, 415, 407, 386, 382.6].map((y, i) => ({ x: lolliX[i], y }))

const psx = 1568 / 548
const pbGridX = [403, 634, 866, 1097, 1329, 1562].map(v => 1180 + v / psx)
const pbGridY = [237, 337, 435, 535].map(v => 710.5 + v / 3)
const pbYLabels = [
  { t: '11.9', x: 1191, y: 797 },
  { t: '9.1', x: 1197, y: 830 },
  { t: '6.2', x: 1197, y: 863 },
  { t: '3.4', x: 1197, y: 896 },
  { t: '0.6', x: 1197, y: 930 }
]
const pbXLabels = [
  { t: '0.4', x: 1224.5 }, { t: '4.6', x: 1305.5 }, { t: '8.9', x: 1387.5 }, { t: '13.2', x: 1463.5 },
  { t: '17.4', x: 1544.5 }, { t: '21.7', x: 1625.5 }, { t: '25.', x: 1707 }
]
const pbRaw = [
  171, 615, 225, 488, 232, 507, 262, 375, 270, 562, 250, 607, 273, 621, 295, 610, 308, 602, 320, 605, 339, 588,
  340, 603, 339, 637, 353, 503, 360, 598, 384, 600, 387, 615, 394, 450, 412, 610, 419, 606, 428, 462, 428, 583,
  438, 627, 448, 582, 452, 615, 457, 582, 459, 358, 480, 504, 501, 623, 514, 605, 521, 526, 535, 614, 539, 424,
  545, 598, 548, 474, 575, 604, 579, 468, 600, 520, 601, 590, 600, 576, 611, 545, 618, 611, 628, 567, 647, 503,
  648, 541, 650, 555, 657, 570, 662, 550, 678, 558, 680, 572, 677, 590, 689, 619, 712, 606, 723, 571, 727, 529,
  737, 533, 741, 575, 741, 600, 755, 600, 760, 595, 762, 583, 768, 450, 780, 597, 785, 522, 790, 600, 797, 569,
  799, 592, 815, 596, 828, 594, 856, 569, 865, 601, 875, 578, 899, 590, 901, 533, 929, 571, 939, 591, 971, 520,
  970, 547, 1009, 590, 1010, 598, 1021, 554, 1050, 511, 1061, 506, 1075, 519, 1084, 535, 1100, 563, 1093, 607,
  1122, 322, 1152, 311, 1210, 139, 1247, 524, 1264, 624, 1468, 576
]
const pbDots = pbRaw
  .filter((_, i) => i % 2 === 0)
  .map((v, i) => ({ x: 1180 + v / psx, y: 710 + pbRaw[i * 2 + 1] / 3 }))

const quotes = [
  { a: '3576.78', b: '-30.90', c: '990.02亿', label: '科创50', up: false },
  { a: '1436.28', b: '-14.12', c: '503.97亿', label: '沪深300', up: false },
  { a: '5224.70', b: '-46.77', c: '3653.63亿', label: '创业板指', up: false },
  { a: '3298.50', b: '+12.99', c: '922.77亿', label: '中证500', up: true }
]
</script>

<style>
html,
body {
  margin: 0;
  background: #ffffe0;
}

/* 半角格，由 T 组件生成，scoped 够不到 */
.hw {
  display: inline-block;
  width: 0.5em;
  text-align: center;
  white-space: pre;
}
.hw.ltr {
  font-family: "Liberation Mono", monospace;
  font-size: 0.96em;
  width: 0.521em;
  text-align: left;
  transform: scaleX(0.868);
  transform-origin: 0 50%;
}
</style>

<style scoped>
.app {
  width: 1728px;
  height: 1080px;
  overflow: hidden;
  display: flex;
  flex-direction: column;
  background: #ffffe0;
  color: #333;
  font-family: "Liberation Serif", "Noto Sans CJK SC", serif;
  font-size: 17.8px;
}

.titlebar {
  height: 38px;
  flex: none;
  border-top: 2px solid #777;
  background: #fff;
  display: flex;
  align-items: center;
  position: relative;
}
.menu {
  display: flex;
  gap: 35px;
  margin-left: -14px;
  font-size: 17.5px;
  padding-top: 4px;
}
.menu-cut {
  width: 19px;
}
.app-title {
  position: absolute;
  left: 603px;
  top: 9px;
  white-space: nowrap;
}

.toolbar {
  height: 85px;
  flex: none;
  background: #e8d8c0;
  display: flex;
  gap: 6px;
  padding-top: 3px;
  box-sizing: border-box;
}
.sliver {
  width: 3px;
  height: 79px;
  background: #f0e0b4;
}
.macro {
  width: 40px;
  height: 79px;
  box-sizing: border-box;
  background: #f4e4b4;
  text-align: center;
  font-size: 20px;
  line-height: 25px;
  padding-top: 12px;
  margin-left: -1px;
  color: #222;
}
.group {
  width: 235px;
  height: 79px;
  background: #b89a6c;
  display: flex;
  box-sizing: border-box;
  padding: 4px 4px 4px 0;
}
.group-name {
  width: 41px;
  flex: none;
  text-align: center;
  color: #f6ead0;
  font-size: 20px;
  line-height: 25px;
  padding-top: 11px;
}
.group-btns {
  display: grid;
  grid-template-columns: 91px 91px;
  grid-template-rows: 31px 32px;
  column-gap: 7px;
  row-gap: 8px;
}
.btn {
  background: #f8e8b0;
  border-radius: 4px;
  display: flex;
  align-items: center;
  justify-content: center;
  box-sizing: border-box;
  padding-bottom: 3px;
  color: #222;
  font-size: 19px;
  white-space: nowrap;
}
.btn.on {
  background: #fdf6dc;
}
.tool-right {
  margin-left: auto;
  display: flex;
  flex-direction: column;
  align-items: flex-end;
  width: 142px;
  position: relative;
}
.date-row {
  position: absolute;
  right: 1px;
  top: 12px;
  display: flex;
  align-items: center;
  gap: 2px;
  white-space: nowrap;
}
.date-ico {
  margin-left: 5px;
}
.periods {
  margin-top: 52px;
  height: 30px;
  width: 142px;
  box-sizing: border-box;
  border: 1px solid #d8a898;
  border-bottom: none;
  background: #ffdcdc;
  display: flex;
}
.period {
  width: 34px;
  text-align: center;
  font-size: 18px;
  line-height: 27px;
  color: #555;
}
.period.on {
  background: #ffa8a8;
  width: 28px;
  margin: 0 3px;
}

.main {
  height: 839px;
  flex: none;
  display: flex;
  border-top: 1px solid #d8a898;
  box-sizing: border-box;
}
.left {
  width: 1186px;
  flex: none;
  display: flex;
  flex-direction: column;
  border-right: 1px solid #d8a898;
  box-sizing: content-box;
}
.chart {
  display: block;
  overflow: hidden;
}
.kline {
  height: 301px;
  flex: none;
  border-bottom: 1px solid #d8a898;
  display: flex;
  flex-direction: column;
}
.kline-head {
  height: 43px;
  flex: none;
  display: flex;
}
.stock-name {
  width: 278px;
  padding-left: 5px;
  box-sizing: border-box;
  font-size: 31px;
  line-height: 38px;
  white-space: nowrap;
}
.stock-info {
  line-height: 22px;
  color: #444;
}
.info-row {
  display: flex;
  white-space: pre;
}
.kline-svg {
  width: 1186px;
  height: 258px;
}
.dash {
  stroke: #d0c8a0;
  stroke-dasharray: 4 3;
}
.dash.dark {
  stroke: #9a6a80;
}
.ma {
  fill: none;
  stroke-width: 1.2;
}
.vol-ma {
  fill: none;
  stroke-width: 1;
}
.wick {
  stroke-width: 1.2;
}
.crisp {
  shape-rendering: crispEdges;
}
.val {
  font-size: 17.5px;
  fill: #444;
}
.date {
  font-size: 17.5px;
  fill: #c8a890;
}
.indicator {
  height: 290px;
  flex: none;
  border-bottom: 1px solid #d8a898;
  display: flex;
  flex-direction: column;
}
.panel-head {
  height: 26px;
  flex: none;
  display: flex;
  align-items: center;
  box-sizing: border-box;
  padding: 0 0 6px 1px;
  white-space: pre;
  position: relative;
}
.ind-title {
  color: #3c8c9c;
}
.ind-val {
  color: #a06850;
  margin-left: 11px;
}
.idx-title {
  color: #444;
}
.idx-pct {
  color: #3f9a50;
}
.panel-icons {
  position: absolute;
  left: 1027px;
  top: 3px;
  display: flex;
  gap: 15px;
}
.panel-icons path {
  fill: none;
  stroke: #aeaea6;
  stroke-width: 2.4;
}
.ind-svg {
  width: 1186px;
  height: 264px;
}
.index {
  height: 219px;
  flex: none;
  display: flex;
  flex-direction: column;
}
.idx-svg {
  width: 1186px;
  height: 192px;
}
.index .panel-head {
  height: 27px;
}
.tabs {
  height: 27px;
  flex: none;
  display: flex;
  margin-left: -15px;
  border-top: 1px solid #e0b4a8;
  box-sizing: border-box;
  overflow: hidden;
  width: 1201px;
  background: #ffffe0;
}
.tab {
  flex: none;
  box-sizing: border-box;
  margin-right: -15px;
  background: #fccccc;
  clip-path: polygon(15px 0, calc(100% - 2px) 0, calc(100% - 17px) 100%, 0 100%);
  font-size: 18px;
  line-height: 26px;
  color: #6a5a50;
  white-space: nowrap;
}
.tab.first {
  background: linear-gradient(90deg, #fff0e0 0%, #fff0e0 50%, #fccccc 100%);
  color: #222;
}

.right {
  width: 640px;
  flex: none;
  display: flex;
  flex-direction: column;
}
.right-heads {
  height: 28px;
  flex: none;
  display: flex;
  border-bottom: 1px solid #d8a898;
  font-size: 17px;
  line-height: 27px;
  text-align: center;
  box-sizing: border-box;
}
.rt-head {
  width: 316px;
  color: #444;
}
.after-head {
  width: 318px;
  background: linear-gradient(#f4dcdc, #d8c0c0);
  border-left: 1px solid #d8a898;
  box-sizing: border-box;
  color: #333;
}
.right-body {
  height: 560px;
  flex: none;
  display: flex;
}
.rt-svg {
  width: 318px;
  height: 560px;
  flex: none;
  border-right: 1px solid #d8a898;
}
.stack {
  width: 318px;
  flex: none;
  display: flex;
  flex-direction: column;
}
.stack-head {
  height: 28px;
  flex: none;
  box-sizing: border-box;
  background: #ffe4e4;
  border-top: 1px solid #e0b8ac;
  border-bottom: 1px solid #e0b8ac;
  text-align: center;
  line-height: 26px;
  font-size: 17.5px;
  white-space: nowrap;
}
.stack-head.fin {
  font-size: 18px;
  padding-right: 8px;
}
.rt-lbl {
  font-size: 17px;
  fill: #5c8a6c;
}
.rt-lbl.gain {
  fill: #a06850;
}
.pb-head {
  height: 29px;
  flex: none;
  box-sizing: border-box;
  width: 636px;
  background: #ffe4e4;
  border-top: 1px solid #d8a898;
  border-bottom: 1px solid #d8a898;
  text-align: center;
  line-height: 27px;
  font-size: 17px;
  white-space: nowrap;
}
.pb-svg {
  width: 634px;
  height: 222px;
}

.ticker {
  height: 27px;
  flex: none;
  display: flex;
  box-sizing: border-box;
  border-top: 1px solid #d8a898;
  border-bottom: 1px solid #d8a898;
  padding-left: 5px;
  background: #ffffe0;
  white-space: nowrap;
  font-size: 18px;
  line-height: 25px;
}
.quote {
  width: 225px;
  flex: none;
  box-sizing: border-box;
  overflow: hidden;
  display: flex;
  justify-content: flex-start;
  gap: 16px;
  border-left: 1px solid #d8a898;
}
.quote span {
  flex: none;
}
.quote span:first-child {
  margin-left: -5px;
}
.quote.down {
  color: #5e7a68;
}
.quote.up {
  color: #a8806a;
}
.quote-label {
  width: 90px;
  flex: none;
  box-sizing: border-box;
  border-left: 1px solid #d8a898;
  text-align: center;
  font-weight: bold;
  color: #1878b8;
}
.news {
  flex: 1;
  display: flex;
  align-items: center;
  gap: 5px;
  border-left: 1px solid #d8a898;
  padding-left: 6px;
  color: #b08a74;
}
.news-text {
  margin-left: 3px;
}

.notice {
  height: 27px;
  flex: none;
  background: #fff8d0;
  position: relative;
  overflow: hidden;
  box-sizing: border-box;
  border-bottom: 1px solid #b09090;
}
.notice-lines {
  margin-top: -7px;
  width: 1574px;
  text-align: center;
  font-size: 17.5px;
  line-height: 25px;
  color: #a87060;
  white-space: nowrap;
}
.notice-icons {
  position: absolute;
  left: 1648px;
  top: 2px;
  display: flex;
  gap: 7px;
}

.taskbar {
  height: 62px;
  flex: none;
  background: linear-gradient(#d8d8dc, #ced0d4);
  display: flex;
  align-items: stretch;
  padding-left: 14px;
  font-family: "Noto Sans", "Noto Sans CJK SC", sans-serif;
  color: #1c1c1c;
  font-size: 18px;
  position: relative;
  overflow: hidden;
}
.task-item {
  display: flex;
  align-items: center;
  box-sizing: border-box;
  border-bottom: 4px solid #1270bc;
  white-space: nowrap;
}
.task-item span {
  font-size: 17.5px;
}
.folder-item {
  width: 228px;
  padding-left: 16px;
  gap: 15px;
}
.pin {
  width: 75px;
  display: flex;
  align-items: center;
  justify-content: center;
}
.folder-item + .pin {
  margin-left: 7px;
}
.active-item {
  width: 240px;
  margin-left: 1px;
  padding-left: 15px;
  gap: 2px;
  background: #e6e6ea;
}
.film-item {
  width: 228px;
  margin-left: 8px;
  padding-left: 9px;
  gap: 3px;
}
.tray {
  flex: none;
  margin-left: 55px;
  display: block;
}
.tiny {
  font-size: 10px;
  fill: #d02020;
  font-family: "Liberation Sans", sans-serif;
}
.bat-text {
  font-size: 19px;
  fill: #fff;
  text-anchor: middle;
  font-family: "Noto Sans", sans-serif;
}
.temp {
  font-size: 20px;
  fill: #1c1c1c;
  font-family: "Noto Sans", "Noto Sans CJK SC", sans-serif;
}
.clock {
  flex: none;
  margin-left: 10px;
  text-align: center;
  font-size: 17.5px;
  line-height: 27px;
  padding-top: 5px;
  white-space: nowrap;
}
.defs {
  position: absolute;
}
</style>
